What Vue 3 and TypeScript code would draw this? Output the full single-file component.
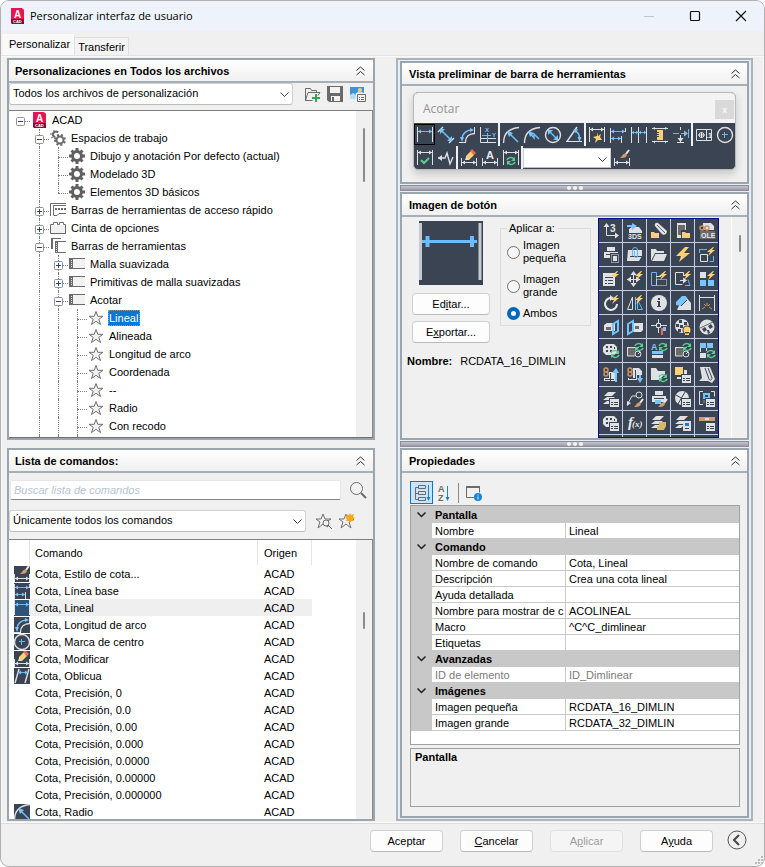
<script setup lang="ts">
import { ref } from 'vue'

/* paint class, path data (or label), then x, y and size for labels */
type Shape = [string, string, number?, number?, number?]

const c = (x: number, y: number, r: number) =>
  `M${x - r} ${y}a${r} ${r} 0 1 0 ${2 * r} 0a${r} ${r} 0 1 0 ${-2 * r} 0z`
const bolt = (x: number, y: number): Shape[] => [['fy', `M${x + 6} ${y}l-6 5h3l-2 4 7-6h-3l2-3z`]]
const fresh = (x: number, y: number): Shape[] => [
  ['sg', `M${x} ${y + 3}c1-3 5-3 7-1M${x + 8} ${y + 5}c-1 3-5 3-7 1`],
  ['fg', `M${x + 8} ${y}v4h-4zM${x} ${y + 8}v-4h4z`],
]
const list = (x: number, y: number): Shape[] => [
  ['fd', `M${x - 1} ${y - 1}h10v9h-10z`],
  ['fw', `M${x} ${y}h9v8h-9z`],
  ['sd', `M${x + 1} ${y + 3.5}h2M${x + 4} ${y + 3.5}h4M${x + 1} ${y + 5.5}h2M${x + 4} ${y + 5.5}h4`],
]
const brush = (x: number, y: number): Shape[] => [
  ['sw2', `M${x + 8} ${y}l-3 4`],
  ['fo', `M${x + 5} ${y + 3}l1 2c-1 3-4 3-7 3 2-1 2-4 6-5z`],
]
const layers: Shape[] = [['fw', 'M5 1h8l-4 4h-8zM4 6h8l-4 3h-8zM4 10h5l-3 3h-6z']]
const ball: Shape[] = [['fw', 'M3 1h8l3 3v6l-3 2h-8l-3-3v-5z'], ['fd', 'M3 3h2v2h-2zM7 3h2v2h-2zM11 4h1v2h-1zM3 7h2v2h-2zM7 7h2v2h-2z']]
const checker: Shape[] = [['fw', c(7, 7, 7)], ['fd', 'M4 1h3v3h-3zM9 3h3v3h-3zM1 5h3v3h-3zM5 6h3v3h-3zM3 10h3v3h-3z']]
const printer: Shape[] = [
  ['fw', 'M4 0h8v4h-8zM1 5h14v6h-14z'],
  ['fd', 'M3 7h10v1h-10z'],
]
const camera: Shape[] = [
  ['fk', 'M1 4h8v9h-8z'],
  ['sw', 'M.5 4.5h8M.5 4v9h7M9 6l3-2' + c(11, 11, 3)],
  ['sw', 'M11 11l2-2'],
]
const topDim: Shape[] = [['sw', 'M.5 0V15M15.5 0V15M1 2.5H15'], ['fw', 'M1 2.5l3-2v4zM15 2.5l-3-2v4z']]
const lowDim: Shape[] = [['sw', 'M.5 8V16M15.5 8V16M1 12.5H15'], ['fw', 'M1 12.5l3-2v4zM15 12.5l-3-2v4z']]
const pencil: Shape[] = [['fy', 'M10 1l3 4-5 5h-3v-4z'], ['fr', 'M9 1l2-2 4 4-2 2z'], ['fw', 'M5 7l3 3h-4z']]
const radiusArc: Shape = ['swd', 'M.5 16C.5 7 6 1.5 16 .5']

const icons: Record<string, Shape[]> = {
  linear: [['sw', 'M.5 0V15M15.5 0V15'], ['sb', 'M1 4.5H15'], ['fb', 'M1 4.5l3-2v4zM15 4.5l-3-2v4z']],
  aligned: [['swd', 'M0 5L5 0M11 16L16 11'], ['sbd', 'M3 3L13 13'], ['fb', 'M2 2h5l-5 5zM14 14h-5l5-5z']],
  arc: [['swd', 'M6.5 15C6.5 10 10 6.5 16 6.5'], ['sw', 'M0 15.5h7M15.5 0v7'], ['sbd', 'M3 12C3 7 7 3 13 3'], ['fb', 'M3 15l-2-5h4zM15 3l-4-2v4z']],
  ordinate: [['sw', 'M.5 0V15.5H16M.5 11.5H16M7.5 9V16'], ['sb', 'M7.5 6V13M2 8.5H11'], ['tb', 'X', 5, 5, 6], ['tb', 'Y', 12, 10, 6]],
  radius: [radiusArc, ['sbd', 'M6 6L15 15'], ['fb', 'M4 4l6 2-4 4z']],
  jogged: [radiusArc, ['sbd', 'M5 5L10 11V7L15 12'], ['fb', 'M4 4l6 2-4 4z']],
  diameter: [['swd', c(8, 8, 7.5)], ['sbd', 'M4 4L12 12'], ['fb', 'M3 3h5l-5 5zM13 13h-5l5-5z']],
  angular: [['swd', 'M11 0L1 14.5'], ['sw', 'M0 14.5H16'], ['sbd', 'M9 4C12 5 13.5 8 13.5 12'], ['fb', 'M7 3l5-1-2 4zM13.5 15l-2-5h4z']],
  quick: [...topDim, ['fy', 'M9 5l-1 4-4 1 3 2-1 4 3-3 4 0-2-3 1-3-3 2z']],
  baseline: [['sw', 'M.5 1V16M15.5 1V5M11.5 9V16'], ['sb', 'M1 4.5H15M1 11.5H11'], ['fb', 'M1 4.5l3-2v4zM15 4.5l-3-2v4zM1 11.5l3-2v4zM11 11.5l-3-2v4z']],
  continued: [['sw', 'M.5 0V16M7.5 0V16M15.5 0V16'], ['sb', 'M1 5.5H15'], ['fb', 'M1 5.5l2-2v4zM7 5.5l-2-2v4zM8 5.5l2-2v4zM15 5.5l-2-2v4z']],
  space: [['sw', 'M0 1.5H16M0 14.5H16'], ['fw', 'M1 1l2-1v3zM15 1l-2-1v3zM1 14.5l2-1v3zM15 14.5l-2-1v3z'], ['fy', 'M5 3h6v10h-6z'], ['sd', 'M5 5.5h2M5 7.5h2M5 9.5h2']],
  breakd: [['sb', 'M0 6.5h6M8 6.5h6M15.5 2v9'], ['fb', 'M15 6.5l-4-3v6z'], ['sw', 'M7.5 0v3M7.5 8v8M4 15.5h7'], ['fw', 'M7.5 15l-3-4h6z']],
  tolerance: [['sw', 'M.5 2.5h15v11h-15zM10.5 2v11M2 8h7M5.5 5v6' + c(5.5, 8, 2.5)], ['tw', '.1', 10, 11, 7]],
  center: [['swd', c(8, 8, 7.5)], ['sb', 'M7.5 5v6M5 7.5h6']],
  inspect: [...topDim, ['sg2', 'M4 10l3 3 5-5']],
  jogline: [['swd', 'M0 8H7L9 3L12 14L15 7'], ['fw', 'M0 8l4-3v6z']],
  dimedit: [...lowDim, ...pencil],
  dimtext: [...lowDim, ['tw', 'A', 4, 9, 11]],
  update: [...topDim, ...fresh(4, 7)],
  style: [...lowDim, ...brush(7, 0)],
  oblique: [['swd', 'M1 15L5 1M11 15L15 1'], ['sb', 'M4 4.5h10'], ['fb', 'M4 4.5l3-2v4zM14 4.5l-3-2v4z']],

  ucs3: [['sw', 'M3.5 1V12.5H15'], ['fw', 'M3.5 0l-3 4h6zM16 12.5l-4-3v6z'], ['tw', '3', 7, 9, 10]],
  imp3ds: [['fw', 'M5 4h7l3 4v2h-13v-4z'], ['sb2', 'M0 3h7'], ['fb', 'M5 0l5 3-5 4z'], ['tw', '3DS', 1, 16, 7]],
  attach: [['fw', 'M7 0l9 8c0 4-4 5-6 2l-6-7c-1-2 1-4 3-3z'], ['sk', 'M6 2l8 8'], ['fy', 'M0 9h3l1 1h4v5h-8z']],
  phone: [['fw', 'M2 0h9v15h-9z'], ['fk', 'M3 2h7v10h-7z'], ['fd', 'M6 7h10v9h-10z'], ['fy', 'M7 9h3l1 1h4v5h-8z']],
  ole: [['fw', 'M4 0h8l3 3v4h-11z'], ['so2', c(3, 5, 2) + c(8, 5, 2)], ['fk', 'M1 8h15v8h-15z'], ['tw', 'OLE', 2, 15, 7]],
  printbox: [...printer, ['fd', 'M7 6h9v10h-9z'], ['dash', 'M8.5 7.5h7v8h-7z'], ['fw', 'M10 9h4v5h-4z']],
  clip: [['fw', 'M1 3h14v6l-3 5h-12z'], ['sd', 'M3 9.5h12'], ['sb', 'M5.5 9V3a2 2 0 0 1 5 0v6a1 1 0 0 1-3 0V4']],
  folder: [['fw', 'M0 2h5l1 2h7v2h-9l-4 8z'], ['fw', 'M4.5 7h11.5l-3 7h-12z']],
  flash: [['fy', 'M10 0L1 9h5l-2 6L15 6h-6l5-6z']],
  scale: [['sb', 'M0 2.5h8M.5 2v4M14.5 9v5.5h-4'], ['sw', 'M1.5 7.5h7v7h-7z'], ...bolt(8, 0)],
  pagebolt: [['fw', 'M0 2h12v13h-12z'], ['sd', 'M2 6.5h8M2 9.5h2M5 9.5h5M2 12.5h2M5 12.5h5'], ...bolt(8, 0)],
  move: [['sw', 'M6.5 2v12M0 8.5h13'], ['fw', 'M6.5 0l-3 4h6zM6.5 16l-3-4h6zM0 8.5l4-3v6zM13 8.5l-4-3v6z'], ...bolt(8, 0)],
  stretch: [['sb', 'M.5 1.5h5v13h-5z'], ['dash', 'M5.5 8.5h10v6h-10z'], ['sw', 'M5 5.5h5'], ...bolt(8, 0)],
  offset: [['sw', 'M8.5 5v-3.5h-8v12h7M5 9.5h6'], ['fw', 'M12 9.5l-4-3v6z'], ['sb', 'M10 14.5h5l-2-6'], ...bolt(8, 0)],
  array: [['fw', 'M1 1h6v6h-6z'], ['fb', 'M1 9h6v6h-6zM9 9h6v6h-6z'], ...bolt(8, 0)],
  rotate: [['sw2', 'M9 3a6 6 0 1 0 5 6'], ['fw', 'M7 0l4 3-4 3z'], ...bolt(8, 0)],
  mirror: [['sw', 'M5.5 2v12.5h-5z'], ['fb', 'M8 2h1v13h-1z'], ['sb', 'M10.5 5l5 9.5h-5z'], ...bolt(8, 0)],
  info: [['fw', c(8, 8, 8)], ['fd', 'M7 3h2v2h-2zM6 6h3v5h1v1h-4v-1h1v-4h-1z']],
  eraser: [['fw', 'M8 2h3l5 6v7h-14z'], ['fb', 'M7 1h4l1 4-6 6-5-1v-3z'], ['sd', 'M6 11l6-6']],
  spark: [['sw', 'M.5 0V16M15.5 0V16M1 2.5H15'], ['so', 'M3 14l3-2M13 14l-3-2M5 9l2 2M11 9l-2 2M8 8v3']],
  boxplane: [['fw', 'M1 6l3-2h8v8h-11z'], ['fk', 'M3 8h5v3h-5z'], ['sb2', 'M10 5l5-3v10l-5 3z']],
  planebox: [['fw', 'M5 4h11v7l-2 2h-9z'], ['fk', 'M8 7h4v3h-4z'], ['sb2', 'M1 5l5-3v10l-5 3z']],
  cross: [['sw', 'M7.5 0v4M7.5 9v5M0 6.5h5M10 6.5h6M5.5 4.5h4v4h-4z'], ['fr', 'M10 9h2v7h-2z'], ['fb', 'M12 8h3v4h-3z']],
  bulb: [...checker, ['fd', c(12, 11, 4.5)], ['fy', c(12, 11, 3.5) + 'M10 13h4v3h-4z']],
  sphere: [['fw', c(8, 8, 7.5)], ['fd', 'M3 10l3-2 2 3-3 2zM9 7l3-2 2 3-3 2zM8 11l2 0 1 3-2 1z'], ['sk', 'M1 9L14 3']],
  ballfresh: [...ball, ...fresh(8, 7)],
  camfresh: [...camera, ...fresh(8, 0)],
  stylefresh: [['tb', 'A', 0, 7, 9], ['fw', 'M1 12h11v3h-11z'], ['fb', 'M1 8h11v3h-11z'], ...fresh(8, 0)],
  tablefresh: [['fb', 'M1 0h6v5h-6zM8 0h6v5h-6z'], ['sw', 'M1.5 5v4M7.5 5v3'], ['fw', 'M1 10h6v5h-6z'], ...fresh(8, 7)],
  up: [['so2', c(3, 3, 2) + c(3, 7, 2)], ['fw', 'M6 5h6v9h-11v-3h5z'], ['sd', 'M2 12.5h9M7.5 6v8'], ['sb2', 'M13 15v-9'], ['fb', 'M13 1l-4 5h7z']],
  down: [['so2', c(3, 3, 2) + c(3, 7, 2)], ['fw', 'M6 1h6l3 3v4h-5v5h-9v-2h5z'], ['sd', 'M2 11.5h7M8.5 3v8'], ['sb2', 'M13 8v5'], ['fb', 'M13 16l-3-5h6z']],
  folderfresh: [['fw', 'M0 1h5l2 3h7v3l-6 6h-8z'], ...fresh(8, 7)],
  blocks: [['fw', 'M9 3h3v5h-3zM2 10h7v2h-7z'], ['fy', 'M0 0h8v8h-8z'], ...list(7, 8)],
  tube: [['fw', 'M1 0h10l5 12-3 4-4-2h-9l3-3z'], ['sd', 'M6 1l4 11c1 2 3 1 3-1l-4-10']],
  layerlist: [...layers, ...list(7, 8)],
  leader: [['sw', 'M0 14L5 5H9' + c(12, 4, 3)], ['fw', 'M0 15v-5l4 2z'], ...brush(8, 8)],
  printbrush: [...printer, ['fb', 'M4 9h6v4h-6z'], ...brush(8, 8)],
  globelist: [['fw', c(7, 7, 7)], ['sd', 'M1 4l12 7M10 1L3 13'], ...list(7, 8)],
  attlist: [['sw', 'M4 .5h-3.5v13h3.5M12 .5h3.5v5'], ['sb2', 'M5 3h5v4h-5z'], ['fk', 'M4 9h3v3h-3z'], ...list(7, 8)],
  balllist: [...ball, ...list(7, 8)],
  fx: [['ti', 'f', 1, 12, 15], ['ti', '(x)', 5, 12, 9]],
  layerfilter: [...layers, ['fn', 'M8 7h7v4l-2 4h-7v-4h2z']],
  layersave: [...layers, ['fw', 'M8 6h8v10h-8z'], ['fm', 'M10 8h4v3h-4z'], ['fd', 'M10 13h4v1h-4z']],
  barlist: [['fo', 'M0 2h16v4h-16z'], ['fw', 'M6 3h4v2h-4z'], ...list(7, 8)],

  gears: [['sk2', c(10, 10, 3.5)], ['gear', c(10, 10, 5)], ['sk2', 'M8 2.5a3 3 0 0 0-5 3l2 2'], ['sk', 'M4 0v2M0 4h3M8 1L7 3M1 8l2-1']],
  gear: [['sk3', c(8, 8, 4.5)], ['sk3', 'M8 0v3M8 13v3M0 8h3M13 8h3M2.5 2.5l2 2M11.5 11.5l2 2M13.5 2.5l-2 2M4.5 11.5l-2 2']],
  quickbar: [['sk', 'M.5 14V1.5H16M3.5 13.5V3.5H16M4 13.5h3l2-2h7'], ['fk', 'M5 6h2v2h-2zM8 6h2v2h-2zM11 6h2v2h-2zM14 6h2v2h-2z']],
  ribbon: [['fl', 'M1 5h14v8h-14z'], ['sk', 'M.5 4.5h3v-2h4v2h2v-2h4v2h2v9h-15z']],
  bars: [['sk', 'M1.5 11V.5H11M5.5 15V3.5H16M5.5 14.5H16'], ['fk', 'M1 0h2v11h-2zM5 3h3v12h-3z'], ['dash', 'M6.5 5V14']],
  bar: [['fl', 'M3 3h13v9h-13z'], ['sk', 'M.5 2.5H16M.5 12.5H16'], ['fk', 'M0 2h4v11h-4z'], ['dash', 'M2.5 4V12']],
  star: [['star', 'M8 1.5L9.8 6.3H15L10.8 9.3L12.5 14.5L8 11.3L3.5 14.5L5.2 9.3L1 6.3H6.2Z']],
  open: [['sk', 'M1.5 14.5V2.5h5l1 2h5v2M1.5 14.5L4 6.5h12l-2 3M1.5 14.5h7'], ['sgn', 'M12 8v8M8 12h8']],
  save: [['fk', 'M0 0h16v16h-14l-2-2z'], ['fl', 'M3 1h10v6h-10zM4 10h9v5h-9z'], ['fk', 'M5 11h2v4h-2z']],
  imglist: [['fm2', 'M0 1h14v12h-14z'], ['fa', 'M0 9l3-2 3 2v4h-6zM5 8l4-3 5 2v3z'], ['fy', c(10, 4, 2)], ['fl', 'M6 7h10v9h-10z'], ['sk', 'M7.5 8.5h8v7h-8zM9 11.5h1M11 11.5h3M9 13.5h1M11 13.5h3']],
  search: [['sk', c(6.5, 6.5, 6)], ['fl', c(6.5, 6.5, 5)], ['sk2', 'M11 11l5 5']],
  starfind: [['star', 'M7 1L9 6H15L10 9L12 14L7 11L2 15L4 9L0 6H5Z'], ['fl', c(10, 10, 3)], ['sk', c(10, 10, 3) + 'M12 12l4 4']],
  starnew: [['star', 'M7 1L9 6H15L10 9L12 15L7 11L2 15L4 9L0 6H5Z'], ['fz', 'M11 0l1 2 3-1-1 3 2 1-2 1 1 2-3 0-1 2-1-2-3 0 1-2-2-1 2-1-1-3 3 1z']],
  categ: [['sk', 'M4.5 .5h7v3h-7zM4.5 6.5h7v3h-7zM4.5 12.5h7v3h-7zM4 2.5H1.5v12H4M1.5 8.5H4'], ['sm', 'M14.5 0v15'], ['fm', 'M14.5 16l-2-4h4z']],
  alpha: [['tk', 'A', 1, 7, 9], ['tk', 'Z', 1, 16, 9], ['sm', 'M10.5 1v14'], ['fm', 'M10.5 16l-2-4h4z']],
  propinfo: [['sk', 'M8 12.5H.5v-11h13v6'], ['fk', 'M0 1h14v2h-14z'], ['fm', c(12, 12, 4)], ['fl', 'M11.5 9.5h1v1h-1zM11.5 11.5h1v3h-1z']],
}

interface Node { guide: string; icon: string; label: string; box?: string; on?: boolean }
const tree: Node[] = [
  { guide: '-', icon: 'acad', label: 'ACAD', box: '−' },
  { guide: ' T', icon: 'gears', label: 'Espacios de trabajo', box: '−' },
  { guide: ' |T', icon: 'gear', label: 'Dibujo y anotación Por defecto (actual)' },
  { guide: ' |T', icon: 'gear', label: 'Modelado 3D' },
  { guide: ' |L', icon: 'gear', label: 'Elementos 3D básicos' },
  { guide: ' T', icon: 'quickbar', label: 'Barras de herramientas de acceso rápido', box: '+' },
  { guide: ' T', icon: 'ribbon', label: 'Cinta de opciones', box: '+' },
  { guide: ' T', icon: 'bars', label: 'Barras de herramientas', box: '−' },
  { guide: ' |T', icon: 'bar', label: 'Malla suavizada', box: '+' },
  { guide: ' |T', icon: 'bar', label: 'Primitivas de malla suavizadas', box: '+' },
  { guide: ' |T', icon: 'bar', label: 'Acotar', box: '−' },
  { guide: ' ||T', icon: 'star', label: 'Lineal', on: true },
  { guide: ' ||T', icon: 'star', label: 'Alineada' },
  { guide: ' ||T', icon: 'star', label: 'Longitud de arco' },
  { guide: ' ||T', icon: 'star', label: 'Coordenada' },
  { guide: ' ||T', icon: 'star', label: '--' },
  { guide: ' ||T', icon: 'star', label: 'Radio' },
  { guide: ' ||T', icon: 'star', label: 'Con recodo' },
  { guide: ' ||T', icon: 'star', label: '' },
]
const guideClass: Record<string, string> = { ' ': 'g-none', '|': 'g-pass', T: 'g-tee', L: 'g-ell', '-': 'g-dash' }

const commands: [string, string][] = [
  ['style', 'Cota, Estilo de cota...'],
  ['baseline', 'Cota, Línea base'],
  ['linear', 'Cota, Lineal'],
  ['arc', 'Cota, Longitud de arco'],
  ['center', 'Cota, Marca de centro'],
  ['dimedit', 'Cota, Modificar'],
  ['oblique', 'Cota, Oblicua'],
  ['', 'Cota, Precisión, 0'],
  ['', 'Cota, Precisión, 0.0'],
  ['', 'Cota, Precisión, 0.00'],
  ['', 'Cota, Precisión, 0.000'],
  ['', 'Cota, Precisión, 0.0000'],
  ['', 'Cota, Precisión, 0.00000'],
  ['', 'Cota, Precisión, 0.000000'],
  ['radius', 'Cota, Radio'],
]

const toolRow1 = ['linear', 'aligned', 'arc', 'ordinate', '|', 'radius', 'jogged', 'diameter', 'angular', '|', 'quick', 'baseline', 'continued', 'space', 'breakd', '|', 'tolerance', 'center']
const toolRow2 = ['inspect', 'jogline', '|', 'dimedit', 'dimtext', 'update', '|']

const gallery = [
  'ucs3', 'imp3ds', 'attach', 'phone', 'ole',
  'printbox', 'clip', 'folder', 'flash', 'scale',
  'pagebolt', 'move', 'stretch', 'offset', 'array',
  'rotate', 'mirror', 'info', 'eraser', 'spark',
  'boxplane', 'planebox', 'cross', 'bulb', 'sphere',
  'ballfresh', 'camfresh', 'stylefresh', 'camfresh', 'tablefresh',
  'up', 'down', 'folderfresh', 'blocks', 'tube',
  'layerlist', 'leader', 'printbrush', 'globelist', 'attlist',
  'balllist', 'fx', 'layerfilter', 'layersave', 'barlist',
  '', '', '', '', '',
]

interface Group { name: string; rows: [string, string][]; off?: boolean }
const groups: Group[] = [
  { name: 'Pantalla', rows: [['Nombre', 'Lineal']] },
  {
    name: 'Comando',
    rows: [
      ['Nombre de comando', 'Cota, Lineal'],
      ['Descripción', 'Crea una cota lineal'],
      ['Ayuda detallada', ''],
      ['Nombre para mostrar de c', 'ACOLINEAL'],
      ['Macro', '^C^C_dimlinear'],
      ['Etiquetas', ''],
    ],
  },
  { name: 'Avanzadas', rows: [['ID de elemento', 'ID_Dimlinear']], off: true },
  { name: 'Imágenes', rows: [['Imagen pequeña', 'RCDATA_16_DIMLIN'], ['Imagen grande', 'RCDATA_32_DIMLIN']] },
]

const applyTo = ref('ambos')
const targets = [
  { id: 'small', label: 'Imagen pequeña' },
  { id: 'large', label: 'Imagen grande' },
  { id: 'ambos', label: 'Ambos' },
]
const shapes = (name: string) => icons[name] ?? []
</script>

<template>
  <main class="dialog">
    <header class="titlebar">
      <svg class="ico logo" viewBox="0 0 16 16"><path class="logo-a" d="M2 0H13L15 2V12H2z" /><path class="logo-b" d="M2 11H15V16H3L2 15z" /><text x="5" y="10" class="logo-t">A</text><text x="4" y="15" class="logo-c">CAD</text></svg>
      <h1>Personalizar interfaz de usuario</h1>
      <div class="winbtns">
        <button type="button" disabled><svg viewBox="0 0 12 12"><path class="wmin" d="M1 6.500H11" /></svg></button>
        <button type="button"><svg viewBox="0 0 12 12"><rect class="wline" x="1.500" y="1.500" width="9" height="9" rx="1" /></svg></button>
        <button type="button"><svg viewBox="0 0 12 12"><path class="wline" d="M1 1L11 11M11 1L1 11" /></svg></button>
      </div>
    </header>

    <nav class="tabs" role="tablist">
      <button type="button" role="tab" class="tab current">Personalizar</button>
      <button type="button" role="tab" class="tab">Transferir</button>
    </nav>

    <div class="page">
      <div class="left">
        <section class="panel">
          <div class="head"><h2>Personalizaciones en Todos los archivos</h2><svg class="fold" viewBox="0 0 9 10"><path d="M.5 4.500L4.500 1L8.500 4.500M.5 9L4.500 5.500L8.500 9" /></svg></div>
          <div class="line">
            <div class="combo">
              <select id="cuix"><option>Todos los archivos de personalización</option></select>
              <svg viewBox="0 0 9 6"><path d="M.5 .5L4.500 4.500L8.500 .5" /></svg>
            </div>
            <div class="minis wide">
              <button v-for="n in ['open', 'save', 'imglist']" :key="n" type="button">
                <svg class="ico" viewBox="0 0 16 16"><path v-for="(s, i) in shapes(n)" :key="i" :class="s[0]" :d="s[1]" /></svg>
              </button>
            </div>
          </div>
          <div class="scroller tree-box">
            <ul class="tree" role="tree">
              <li v-for="(n, r) in tree" :key="r" role="treeitem">
                <span v-for="(g, i) in n.guide.split('')" :key="i" class="guide" :class="guideClass[g]">
                  <span v-if="n.box && i === n.guide.length - 1" class="box">
                    <svg viewBox="0 0 9 9"><rect x=".5" y=".5" width="8" height="8" rx="1" /><path :d="n.box === '+' ? 'M2 4.500H7M4.500 2V7' : 'M2 4.500H7'" /></svg>
                  </span>
                </span>
                <svg v-if="n.icon === 'acad'" class="ico tico" viewBox="0 0 16 16"><path class="logo-a" d="M2 0H13L15 2V12H2z" /><path class="logo-b" d="M2 11H15V16H3L2 15z" /><text x="5" y="10" class="logo-t">A</text><text x="4" y="15" class="logo-c">CAD</text></svg>
                <svg v-else class="ico tico" viewBox="0 0 16 16"><path v-for="(s, i) in shapes(n.icon)" :key="i" :class="s[0]" :d="s[1]" /></svg>
                <span class="label" :class="{ picked: n.on }">{{ n.label }}</span>
              </li>
            </ul>
            <div class="vbar"><span class="thumb long"></span></div>
          </div>
        </section>

        <section class="panel">
          <div class="head"><h2>Lista de comandos:</h2><svg class="fold" viewBox="0 0 9 10"><path d="M.5 4.500L4.500 1L8.500 4.500M.5 9L4.500 5.500L8.500 9" /></svg></div>
          <div class="line find">
            <input type="text" aria-label="Buscar" placeholder="Buscar lista de comandos" />
            <button type="button" class="mini"><svg class="ico" viewBox="0 0 16 16"><path v-for="(s, i) in shapes('search')" :key="i" :class="s[0]" :d="s[1]" /></svg></button>
          </div>
          <div class="line filter">
            <div class="combo">
              <select id="filter"><option>Únicamente todos los comandos</option></select>
              <svg viewBox="0 0 9 6"><path d="M.5 .5L4.500 4.500L8.500 .5" /></svg>
            </div>
            <div class="minis">
              <button v-for="n in ['starfind', 'starnew']" :key="n" type="button">
                <svg class="ico" viewBox="0 0 16 16"><path v-for="(s, i) in shapes(n)" :key="i" :class="s[0]" :d="s[1]" /></svg>
              </button>
            </div>
          </div>
          <div class="scroller list-box">
            <div class="grow">
              <table class="commands">
                <colgroup><col class="c-ico" /><col class="c-cmd" /><col class="c-org" /></colgroup>
                <thead><tr><th></th><th>Comando</th><th>Origen</th></tr></thead>
                <tbody>
                  <tr v-for="(row, r) in commands" :key="row[1]" :class="{ sel: r === 2 }">
                    <td class="cell-ico"><svg v-if="row[0]" class="ico chip" viewBox="0 0 16 16"><path v-for="(s, i) in shapes(row[0])" :key="i" :class="s[0]" :d="s[1]" /></svg></td>
                    <td>{{ row[1] }}</td>
                    <td>ACAD</td>
                  </tr>
                </tbody>
              </table>
            </div>
            <div class="vbar"><span class="thumb mid"></span></div>
          </div>
        </section>
      </div>

      <div class="right">
        <section class="panel preview">
          <div class="head"><h2>Vista preliminar de barra de herramientas</h2><svg class="fold" viewBox="0 0 9 10"><path d="M.5 4.500L4.500 1L8.500 4.500M.5 9L4.500 5.500L8.500 9" /></svg></div>
          <div class="toolbar">
            <div class="tb-head"><span>Acotar</span><button type="button" disabled>x</button></div>
            <div class="tb-row">
              <template v-for="(n, r) in toolRow1" :key="r">
                <span v-if="n === '|'" class="sep"></span>
                <button v-else type="button" class="tool" :class="{ active: r === 0 }">
                  <svg class="ico" viewBox="0 0 16 16"><template v-for="(s, i) in shapes(n)" :key="i"><text v-if="s[2] !== undefined" :class="s[0]" :x="s[2]" :y="s[3]" :font-size="s[4]">{{ s[1] }}</text><path v-else :class="s[0]" :d="s[1]" /></template></svg>
                </button>
              </template>
            </div>
            <div class="tb-row">
              <template v-for="(n, r) in toolRow2" :key="r">
                <span v-if="n === '|'" class="sep"></span>
                <button v-else type="button" class="tool">
                  <svg class="ico" viewBox="0 0 16 16"><template v-for="(s, i) in shapes(n)" :key="i"><text v-if="s[2] !== undefined" :class="s[0]" :x="s[2]" :y="s[3]" :font-size="s[4]">{{ s[1] }}</text><path v-else :class="s[0]" :d="s[1]" /></template></svg>
                </button>
              </template>
              <div class="combo dimstyle">
                <select aria-label="Acotar"><option></option></select>
                <svg viewBox="0 0 9 6"><path d="M.5 .5L4.500 4.500L8.500 .5" /></svg>
              </div>
              <button type="button" class="tool"><svg class="ico" viewBox="0 0 16 16"><path v-for="(s, i) in shapes('style')" :key="i" :class="s[0]" :d="s[1]" /></svg></button>
            </div>
          </div>
        </section>

        <div class="splitter"><i></i><i></i><i></i></div>

        <section class="panel image">
          <div class="head"><h2>Imagen de botón</h2><svg class="fold" viewBox="0 0 9 10"><path d="M.5 4.500L4.500 1L8.500 4.500M.5 9L4.500 5.500L8.500 9" /></svg></div>
          <div class="image-body">
            <div class="image-left">
              <div class="pair">
                <div class="stack">
                  <svg class="big" viewBox="0 0 64 64"><rect class="big-bg" width="64" height="64" /><path class="big-w" d="M1.500 2V59M61 2V59" /><path class="big-b" d="M3 20.500H58" /><path class="big-b wide-b" d="M8.500 15V26M53 15V26" /></svg>
                  <button type="button" class="btn">Ed<u>i</u>tar...</button>
                  <button type="button" class="btn">E<u>x</u>portar...</button>
                </div>
                <fieldset>
                  <legend>Aplicar a:</legend>
                  <label v-for="t in targets" :key="t.id" :for="t.id">
                    <input :id="t.id" v-model="applyTo" type="radio" name="target" :value="t.id" /><span>{{ t.label }}</span>
                  </label>
                </fieldset>
              </div>
              <p class="name"><b>Nombre:</b><span>RCDATA_16_DIMLIN</span></p>
            </div>
            <div class="gallery">
              <button v-for="(n, r) in gallery" :key="r" type="button">
                <svg class="ico" viewBox="0 0 16 16"><template v-for="(s, i) in shapes(n)" :key="i"><text v-if="s[2] !== undefined" :class="s[0]" :x="s[2]" :y="s[3]" :font-size="s[4]">{{ s[1] }}</text><path v-else :class="s[0]" :d="s[1]" /></template></svg>
              </button>
            </div>
            <div class="vbar plain"><span class="thumb short"></span></div>
          </div>
        </section>

        <div class="splitter"><i></i><i></i><i></i></div>

        <section class="panel props">
          <div class="head"><h2>Propiedades</h2><svg class="fold" viewBox="0 0 9 10"><path d="M.5 4.500L4.500 1L8.500 4.500M.5 9L4.500 5.500L8.500 9" /></svg></div>
          <div class="props-body">
            <div class="modes">
              <template v-for="n in ['categ', 'alpha', 'propinfo']" :key="n">
                <span v-if="n === 'propinfo'" class="mode-sep"></span>
                <button type="button" :class="{ on: n === 'categ' }">
                  <svg class="ico" viewBox="0 0 16 16"><template v-for="(s, i) in shapes(n)" :key="i"><text v-if="s[2] !== undefined" :class="s[0]" :x="s[2]" :y="s[3]" :font-size="s[4]">{{ s[1] }}</text><path v-else :class="s[0]" :d="s[1]" /></template></svg>
                </button>
              </template>
            </div>
            <div class="grid-box">
              <table class="grid">
                <colgroup><col class="p-fold" /><col class="p-name" /><col /></colgroup>
                <tbody v-for="g in groups" :key="g.name">
                  <tr class="cat"><th><svg viewBox="0 0 9 6"><path d="M.5 .5L4.500 4.500L8.500 .5" /></svg></th><th colspan="2">{{ g.name }}</th></tr>
                  <tr v-for="row in g.rows" :key="row[0]" :class="{ off: g.off }"><td class="gutter"></td><td>{{ row[0] }}</td><td class="value">{{ row[1] }}</td></tr>
                </tbody>
              </table>
            </div>
            <div class="hint"><b>Pantalla</b></div>
          </div>
        </section>
      </div>
    </div>

    <footer class="footer">
      <button type="button" class="btn">Aceptar</button>
      <button type="button" class="btn"><u>C</u>ancelar</button>
      <button type="button" class="btn" disabled>A<u>p</u>licar</button>
      <button type="button" class="btn">A<u>y</u>uda</button>
      <button type="button" class="round"><svg viewBox="0 0 20 20"><circle cx="10" cy="10" r="9" /><path d="M12 5L7 10L12 15" /></svg></button>
    </footer>
    <svg class="grip" viewBox="0 0 9 9"><path d="M7 0h2v2h-2zM7 3h2v2h-2zM7 6h2v2h-2zM4 3h2v2h-2zM4 6h2v2h-2zM1 6h2v2h-2z" /></svg>
  </main>
</template>

<style>
body { background: #fff; }
</style>

<style scoped>
* { box-sizing: border-box; }
.dialog {
  position: relative;
  display: flex;
  flex-direction: column;
  min-height: 100vh;
  border: 1px solid #b0b0b0;
  border-radius: 9px;
  overflow: hidden;
  background: #f0f0f0;
  color: #000;
  font: 11px/14px "Liberation Sans", Arial, sans-serif;
}
button, input, select { font: inherit; color: inherit; margin: 0; }
button { padding: 0; border: 0; background: none; }
h1, h2, p, ul { margin: 0; padding: 0; }
svg { display: block; flex: none; fill: none; }
.ico { width: 16px; height: 16px; overflow: visible; }

.titlebar { display: flex; align-items: center; height: 30px; padding: 0 17px 0 8px; background: #eef3fb; }
.titlebar h1 { flex: 1; padding-left: 5px; font: 11px/16px "Open Sans", "Noto Sans", sans-serif; }
.logo-a { fill: #e5164f; }
.logo-b { fill: #8c0b35; }
.logo-t { fill: #fff; font: bold 10px "Liberation Sans", sans-serif; }
.logo-c { fill: #fff; font: bold 4px "Liberation Sans", sans-serif; }
.winbtns { display: flex; gap: 34px; }
.winbtns svg { width: 12px; height: 12px; }
.wline { stroke: #111; stroke-width: 1.2; }
.wmin { stroke: #c2c6cc; }

.tabs { display: flex; align-items: flex-end; height: 24px; padding-left: 1px; }
.tab { height: 18px; padding: 0 3px; border: 1px solid #dfdfdf; border-bottom: 0; background: #f3f3f3; white-space: nowrap; }
.tab.current { height: 21px; padding: 0 3px 2px 6px; border-color: #fafafa; background: #f9f9f9; }

.page {
  display: grid;
  grid-template-columns: minmax(0, 368fr) minmax(0, 357fr);
  gap: 21px;
  align-items: start;
  padding: 2px 11px 2px 6px;
  border-top: 1px solid #e3e3e3;
  border-bottom: 1px solid #dcdcdc;
  box-shadow: inset 0 0 0 1px #fafafa;
}
.left { display: flex; flex-direction: column; gap: 8px; }
.panel { border: 2px solid #9aa5ae; background: #f0f0f0; min-width: 0; }
.head {
  display: flex;
  align-items: center;
  justify-content: space-between;
  height: 23px;
  padding: 0 8px 0 6px;
  border-bottom: 2px solid #a5afb8;
  background: linear-gradient(#fff, #f0f0f0);
}
.right .head { padding: 0 7px; }
.head h2 { font: bold 11px/14px "Liberation Sans", Arial, sans-serif; white-space: nowrap; }
.fold { width: 9px; height: 10px; }
.fold path { stroke: #333; }

.line { display: flex; align-items: center; }
.combo { position: relative; flex: 1; height: 22px; }
.combo select {
  width: 100%;
  height: 100%;
  padding: 0 20px 2px 3px;
  border: 1px solid #d0d0d0;
  border-bottom-color: #bdbdbd;
  border-radius: 3px;
  background: #fff;
  appearance: none;
}
.combo svg { position: absolute; right: 4px; top: 9px; width: 9px; height: 6px; pointer-events: none; }
.combo svg path { stroke: #444; }
.minis { display: flex; gap: 7px; padding: 0 18px 0 10px; }
.minis.wide { padding: 0 7px 0 11px; }
.find { height: 20px; margin: 7px 7px 0 1px; }
.find input { flex: 1; min-width: 0; height: 20px; padding: 0 3px; border: 1px solid #e6e6e6; border-bottom: 1px solid #868686; border-radius: 2px; background: #fff; }
.find input::placeholder { color: #b4c4d4; font-style: italic; opacity: 1; }
.mini { margin-left: 9px; }
.filter { margin: 10px 0 7px; }

.scroller { display: flex; overflow: hidden; border-top: 1px solid #7f7f7f; border-right: 1px solid #8a8a8a; background: #fff; }
.tree-box { height: 328px; margin-top: 5px; border-bottom: 1px solid #6f6f6f; }
.list-box { height: 280px; }
.vbar { flex: none; width: 16px; padding-left: 7px; background: #f0f0f0; }
.thumb { display: block; width: 2px; background: #8b8b8b; border-radius: 1px; }
.thumb.long { height: 54px; margin-top: 17px; }
.thumb.mid { height: 17px; margin-top: 72px; }
.thumb.short { height: 17px; margin-top: 18px; }

.tree { flex: 1; padding-left: 2px; list-style: none; }
.tree li { display: flex; align-items: center; height: 18px; white-space: nowrap; }
.guide { position: relative; width: 19px; height: 18px; flex: none; }
.guide::before, .guide::after { content: ""; position: absolute; }
.g-pass::before, .g-tee::before { left: 9px; top: 0; height: 18px; border-left: 1px dotted #808080; }
.g-ell::before { left: 9px; top: 0; height: 10px; border-left: 1px dotted #808080; }
.g-tee::after, .g-ell::after, .g-dash::after { left: 9px; right: 0; top: 10px; border-top: 1px dotted #808080; }
.box { position: absolute; z-index: 1; left: 5px; top: 6px; }
.box svg { width: 9px; height: 9px; }
.box rect { fill: #fff; stroke: #919191; }
.box path { stroke: #26448c; }
.tico { margin: 0 4px 0 1px; }
.label { padding: 0 1px; line-height: 16px; }
.picked { background: #0078d7; color: #fff; outline: 1px dotted #d98a35; outline-offset: -1px; padding: 0 2px 0 1px; }

.grow { flex: 1; }
.commands { width: 303px; border-collapse: separate; border-spacing: 0; table-layout: fixed; }
.c-ico { width: 21px; }
.c-cmd { width: 228px; }
.c-org { width: 54px; }
.commands th { height: 25px; padding: 0 0 0 5px; border-right: 1px solid #e5e5e5; font-weight: normal; text-align: left; }
.commands td { height: 17px; padding: 0 0 0 5px; line-height: 14px; white-space: nowrap; }
.commands th:last-child, .commands td:last-child { padding-left: 6px; }
.commands .cell-ico { padding: 0 0 0 5px; background: #fff; }
.commands .sel { background: #efefef; }
.chip { background: #3b4453; overflow: hidden; }
.sel .chip { background: #2c5378; }

.right { display: flex; flex-direction: column; padding: 1px 2px; border: 2px solid #a9b4bd; background: #e8edf1; }
.preview { min-height: 123px; }
.toolbar { margin: 6px 11px 0; border: 1px solid #b9b9b9; border-radius: 5px; overflow: hidden; background: #3b4453; box-shadow: 0 4px 8px rgba(0, 0, 0, .18); }
.tb-head { display: flex; justify-content: space-between; height: 30px; padding-left: 9px; background: #f3f3f3; color: #949494; font: 12px/31px "Open Sans", "Noto Sans", sans-serif; }
.tb-head button { align-self: flex-end; width: 19px; height: 19px; margin-bottom: 4px; margin-right: 1px; background: #d9d9d9; color: #f6f6f6; font: bold 9px/16px "Open Sans", sans-serif; }
.tb-row { display: flex; align-items: center; height: 23px; }
.tool { display: flex; align-items: center; justify-content: center; width: 21px; height: 21px; flex: none; }
.tool.active { border: 1px solid #000; }
.sep { width: 2px; height: 23px; background: #f0f0f0; flex: none; }
.dimstyle { flex: none; width: 88px; height: 20px; }
.dimstyle select { border-radius: 0; }

.splitter { display: flex; align-items: center; justify-content: center; gap: 2px; height: 6px; margin: 1px 0; border: 1px solid #8d8d96; background: linear-gradient(#c4c4d0, #9c9cab); }
.splitter i { width: 4px; height: 4px; border-radius: 50%; background: #f2f2f6; }
.image { height: 248px; overflow: hidden; }
.image-body { display: flex; }
.image-left { flex: 1; min-width: 0; padding: 4px 0 0 5px; }
.pair { display: flex; gap: 10px; padding-left: 2px; }
.stack { display: flex; flex-direction: column; align-items: center; padding-left: 3px; }
.big { width: 64px; height: 64px; margin-bottom: 2px; }
.big-bg { fill: #3b4453; }
.big-w { stroke: #c5c9d0; stroke-width: 3; }
.big-b { stroke: #6cbcff; stroke-width: 3; }
.wide-b { stroke-width: 4; }
.btn { height: 22px; border: 1px solid #d0d0d0; border-bottom-color: #bababa; border-radius: 4px; background: #fdfdfd; }
.stack .btn { width: 78px; margin-top: 6px; }
.btn:disabled { background: #f5f5f5; color: #9d9d9d; border-color: #e0e0e0; }
fieldset { width: 91px; height: 105px; margin: 0; padding: 4px 0 0 6px; border: 1px solid #dcdcdc; }
legend { padding: 0 2px; line-height: 14px; }
fieldset label { display: flex; align-items: center; gap: 3px; line-height: 13px; margin-bottom: 8px; }
fieldset input { appearance: none; width: 13px; height: 13px; flex: none; margin: 0; border: 1px solid #707070; border-radius: 50%; background: #f7f7f7; }
fieldset input:checked { border: 4px solid #0067c0; background: #fff; }
fieldset label span { width: 60px; }
.name { display: flex; gap: 8px; padding-top: 11px; }
.gallery { display: grid; grid-template-columns: repeat(5, 23px); grid-auto-rows: 23px; gap: 1px; flex: none; height: 220px; overflow: hidden; margin-top: 1px; border: 1px solid #00108c; border-bottom: 0; background: #c3cdea; outline: 1px solid #00108c; outline-offset: -1px; }
.gallery button { display: flex; align-items: center; justify-content: center; background: #3b4453; }
.vbar.plain { width: 16px; margin-left: 12px; border-left: 1px solid #fff; }

.props-body { padding: 8px 7px 9px 8px; }
.modes { display: flex; align-items: center; height: 23px; margin-bottom: 1px; }
.modes button { display: flex; align-items: center; justify-content: center; width: 23px; height: 23px; border: 1px solid transparent; }
.modes .on { border-color: #0078d7; background: #cce4f7; }
.mode-sep { width: 1px; height: 20px; margin: 0 3px 0 2px; background: #8a8a8a; }
.grid-box { height: 240px; border: 1px solid #a0a0a0; background: #fff; }
.grid { width: 100%; border-collapse: separate; border-spacing: 0; table-layout: fixed; }
.p-fold { width: 21px; }
.p-name { width: 133px; }
.grid th, .grid td { height: 16px; padding: 0 0 0 3px; line-height: 14px; text-align: left; white-space: nowrap; overflow: hidden; }
.grid .cat { background: #c8c8c8; }
.grid tbody:first-of-type th { height: 17px; }
.grid th:first-child { padding-left: 6px; }
.grid th svg { width: 9px; height: 6px; }
.grid th svg path { stroke: #222; stroke-width: 1.5; }
.grid td { border-bottom: 1px solid #c8c8c8; }
.grid .value { border-left: 1px solid #c8c8c8; }
.grid .gutter { background: #c8c8c8; }
.off { color: #7a7a7a; }
.hint { height: 59px; margin-top: 3px; padding: 1px 4px; border: 1px solid #a0a0a0; }

.footer { display: flex; flex: 1; align-items: flex-start; justify-content: flex-end; gap: 17px; padding: 6px 17px 12px; }
.footer .btn { width: 73px; }
.round { margin-left: -3px; }
.round svg { width: 20px; height: 20px; }
.round circle { stroke: #555; }
.round path { stroke: #444; stroke-width: 2; }
.grip { position: absolute; right: 1px; bottom: 1px; width: 9px; height: 9px; fill: #bcbcbc; }

.sw { stroke: #dde0e5; }
.swd { stroke: #dde0e5; stroke-width: 1.4; }
.sw2 { stroke: #e6e8ec; stroke-width: 2; }
.fw { fill: #dfe1e4; }
.sb { stroke: #63b8f5; }
.sbd { stroke: #6cc0ff; stroke-width: 1.5; }
.sb2 { stroke: #6fc3ff; stroke-width: 2; }
.fb { fill: #7ac4ff; }
.fy { fill: #ffd076; }
.fn { fill: #d8b968; }
.fz { fill: #f5a81c; }
.sg { stroke: #58d091; stroke-width: 1.5; }
.sg2 { stroke: #58d091; stroke-width: 2; }
.fg { fill: #58d091; }
.sgn { stroke: #2fa84f; stroke-width: 2; }
.so { stroke: #cf9568; }
.so2 { stroke: #cf9568; stroke-width: 1.5; }
.fo { fill: #cf9d6c; }
.fr { fill: #f0685a; }
.fd { fill: #3b4453; }
.sd { stroke: #3b4453; }
.fk { fill: #6a6a6a; }
.sk { stroke: #6a6a6a; }
.sk2 { stroke: #6a6a6a; stroke-width: 2; }
.sk3 { stroke: #606060; stroke-width: 3; }
.gear { stroke: #6a6a6a; stroke-width: 2; stroke-dasharray: 2 2; }
.fl { fill: #f2f2f2; }
.fa { fill: #b7def7; }
.fm { fill: #1583d8; }
.fm2 { fill: #3c93d6; }
.sm { stroke: #1583d8; }
.dash { stroke: #e6e6e6; stroke-dasharray: 1 1; }
.star { fill: #f1f1f1; stroke: #707070; }
.tw { fill: #e6e8ec; font-family: "Liberation Sans", sans-serif; font-weight: bold; }
.tb { fill: #7ac4ff; font-family: "Liberation Sans", sans-serif; font-weight: bold; }
.tk { fill: #6a6a6a; font-family: "Liberation Sans", sans-serif; font-weight: bold; }
.ti { fill: #e6e8ec; font-family: "Liberation Serif", serif; font-style: italic; font-weight: bold; }
</style>
